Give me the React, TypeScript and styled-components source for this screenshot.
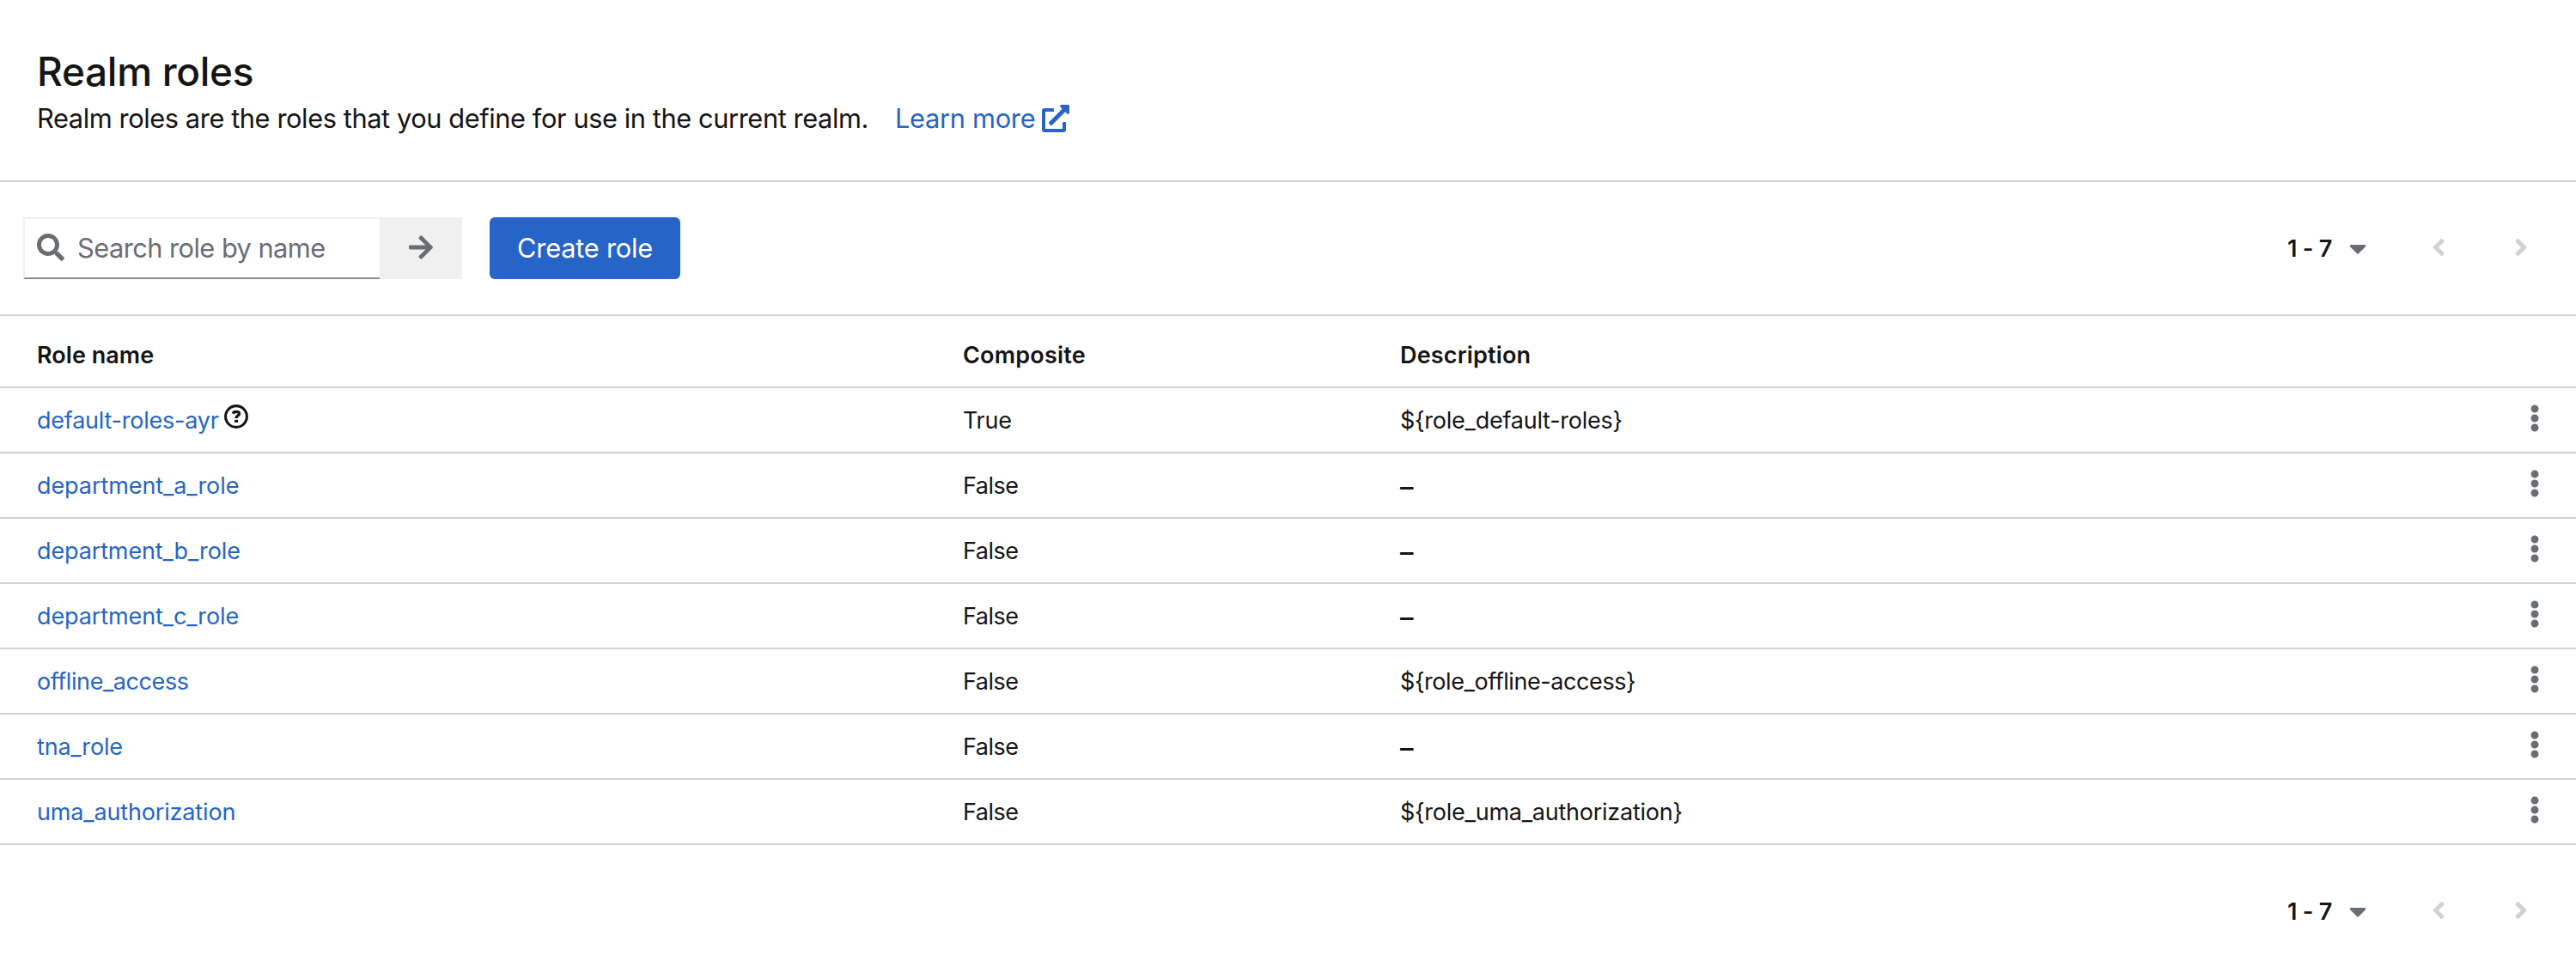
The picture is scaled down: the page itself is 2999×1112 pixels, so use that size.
import React from 'react';
import styled, { createGlobalStyle } from 'styled-components';
import {
  FaAngleLeft,
  FaAngleRight,
  FaArrowRight,
  FaCaretDown,
  FaEllipsisV,
  FaExternalLinkAlt,
  FaSearch,
} from 'react-icons/fa';

const color = {
  text: '#151515',
  muted: '#6a6e73',
  link: '#2665c7',
  line: '#d2d2d2',
  soft: '#f0f0f0',
};

const GlobalStyle = createGlobalStyle`
  *, *::before, *::after { box-sizing: border-box; }
  body {
    margin: 0;
    background: #fff;
    color: ${color.text};
    font-family: Inter, "Liberation Sans", sans-serif;
  }
  svg { display: block; flex: none; }
  button { font: inherit; color: inherit; border: 0; background: none; padding: 0; }
`;

const Page = styled.main`
  min-height: 1112px;
`;

const Tracked = styled.span<{ $spacing?: number }>`
  letter-spacing: ${(p) => p.$spacing ?? 0}px;
  white-space: nowrap;
`;

const Icon = styled.span<{ $width: number }>`
  display: flex;
  flex: none;
  svg { width: ${(p) => p.$width}px; height: 32px; }
`;

const Header = styled.header`
  height: 212px;
  padding: 52px 43px 0;
  border-bottom: 2px solid ${color.line};
`;

const Title = styled.h1`
  margin: 0;
  font-size: 46px;
  font-weight: 500;
  line-height: 62px;
`;

const Intro = styled.p`
  display: flex;
  align-items: center;
  gap: 31px;
  margin: 0;
  font-size: 30.8px;
  line-height: 47px;
`;

const LearnMore = styled.a`
  display: flex;
  align-items: center;
  gap: 8px;
  color: ${color.link};
  text-decoration: none;
`;

const Toolbar = styled.div`
  display: flex;
  align-items: center;
  height: 154px;
  padding: 0 56px 0 27px;
  font-size: 30.8px;
`;

const SearchGroup = styled.div`
  display: flex;
  height: 72px;
  margin-right: 32px;
`;

const SearchField = styled.label`
  display: flex;
  align-items: center;
  width: 415px;
  padding: 0 0 2px 14px;
  gap: 15px;
  color: ${color.muted};
  border: 2px solid ${color.soft};
  border-right: 0;
  border-bottom-color: #8a8d90;
`;

const SearchInput = styled.input`
  flex: 1;
  min-width: 0;
  border: 0;
  padding: 0;
  outline: none;
  background: transparent;
  font: inherit;
  letter-spacing: -0.55px;
  color: ${color.text};
  &::placeholder { color: ${color.muted}; opacity: 1; }
`;

const SearchSubmit = styled.button`
  display: flex;
  align-items: center;
  justify-content: center;
  width: 96px;
  padding-bottom: 2px;
  background: ${color.soft};
  color: ${color.muted};
`;

const CreateButton = styled.button`
  width: 222px;
  height: 72px;
  padding-bottom: 2px;
  border-radius: 6px;
  background: ${color.link};
  color: #fff;
`;

const PaginationBar = styled.div`
  display: flex;
  align-items: center;
  margin-left: auto;
  color: ${color.line};
`;

const RangeToggle = styled.button`
  display: flex;
  align-items: center;
  justify-content: space-between;
  width: 92px;
  margin-right: 76px;
  color: ${color.text};
  font-size: 27px;
  font-weight: 600;
  svg { color: ${color.muted}; }
`;

const PageButton = styled.button`
  display: flex;
  padding-bottom: 2px;
  & + & { margin-left: 80px; }
`;

const Footer = styled.footer`
  display: flex;
  align-items: center;
  height: 154px;
  padding-right: 56px;
`;

const Table = styled.div`
  border-top: 2px solid ${color.line};
  font-size: 27px;
`;

const Row = styled.div`
  display: grid;
  grid-template-columns: 1078px 509px 1fr 12px;
  align-items: center;
  height: 76px;
  padding: 0 42px 0 43px;
  border-bottom: 2px solid ${color.line};
`;

const HeadRow = styled(Row)`
  height: 84px;
  padding-top: 8px;
  font-weight: 600;
`;

const Cell = styled.div`
  display: flex;
  align-items: center;
`;

const RoleLink = styled.a`
  color: ${color.link};
  text-decoration: none;
`;

const Dash = styled.span`
  padding-top: 3px;
  font-size: 31px;
  font-weight: 500;
`;

const HelpIcon = styled.svg`
  margin: -8px 0 0 6px;
`;

const Kebab = styled.button`
  display: flex;
  color: ${color.muted};
  margin-bottom: 4px;
`;

type Text = [string, number];
interface Role {
  name: Text;
  composite: boolean;
  description?: Text;
  help?: boolean;
}

const roles: Role[] = [
  { name: ['default-roles-ayr', -0.23], composite: true, description: ['${role_default-roles}', -0.24], help: true },
  { name: ['department_a_role', -0.08], composite: false },
  { name: ['department_b_role', -0.13], composite: false },
  { name: ['department_c_role', -0.11], composite: false },
  { name: ['offline_access', -0.42], composite: false, description: ['${role_offline-access}', -0.42] },
  { name: ['tna_role', -0.2], composite: false },
  { name: ['uma_authorization', -0.16], composite: false, description: ['${role_uma_authorization}', -0.24] },
];

function Help() {
  return (
    <HelpIcon width="28" height="28" viewBox="0 0 28 28" fill="none" stroke="currentColor">
      <circle cx="14" cy="14" r="12.4" strokeWidth="3.1" />
      <path d="M10.2 10.6C10.9 8.9 12.2 8.3 14 8.3c2.3 0 3.6 1 3.6 2.5 0 2-3.4 2.1-3.6 5.2" strokeWidth="3.3" />
      <path d="M12.1 19.4h4" strokeWidth="3.2" />
    </HelpIcon>
  );
}

function Pagination() {
  return (
    <PaginationBar>
      <RangeToggle>
        <Tracked $spacing={-0.24}>1 - 7</Tracked>
        <Icon $width={20}><FaCaretDown /></Icon>
      </RangeToggle>
      <PageButton aria-label="Previous page">
        <Icon $width={16}><FaAngleLeft /></Icon>
      </PageButton>
      <PageButton aria-label="Next page">
        <Icon $width={16}><FaAngleRight /></Icon>
      </PageButton>
    </PaginationBar>
  );
}

export default function App() {
  return (
    <Page>
      <GlobalStyle />
      <Header>
        <Title>
          <Tracked $spacing={-0.3}>Realm roles</Tracked>
        </Title>
        <Intro>
          <Tracked $spacing={-0.42}>
            Realm roles are the roles that you define for use in the current realm.
          </Tracked>
          <LearnMore>
            <Tracked $spacing={-0.31}>Learn more</Tracked>
            <Icon $width={32}><FaExternalLinkAlt /></Icon>
          </LearnMore>
        </Intro>
      </Header>

      <Toolbar>
        <SearchGroup>
          <SearchField>
            <Icon $width={32}><FaSearch /></Icon>
            <SearchInput placeholder="Search role by name" />
          </SearchField>
          <SearchSubmit aria-label="Search">
            <Icon $width={28}><FaArrowRight /></Icon>
          </SearchSubmit>
        </SearchGroup>
        <CreateButton>
          <Tracked $spacing={-0.24}>Create role</Tracked>
        </CreateButton>
        <Pagination />
      </Toolbar>

      <Table>
        <HeadRow>
          <Tracked $spacing={0.04}>Role name</Tracked>
          <Tracked $spacing={0.22}>Composite</Tracked>
          <Tracked $spacing={0.16}>Description</Tracked>
        </HeadRow>
        {roles.map((role) => (
          <Row key={role.name[0]}>
            <Cell>
              <RoleLink>
                <Tracked $spacing={role.name[1]}>{role.name[0]}</Tracked>
              </RoleLink>
              {role.help && <Help />}
            </Cell>
            <Tracked $spacing={role.composite ? -0.3 : -0.52}>{role.composite ? 'True' : 'False'}</Tracked>
            {role.description ? (
              <Tracked $spacing={role.description[1]}>{role.description[0]}</Tracked>
            ) : (
              <Dash>–</Dash>
            )}
            <Kebab aria-label="Actions">
              <Icon $width={12}><FaEllipsisV /></Icon>
            </Kebab>
          </Row>
        ))}
      </Table>

      <Footer>
        <Pagination />
      </Footer>
    </Page>
  );
}
